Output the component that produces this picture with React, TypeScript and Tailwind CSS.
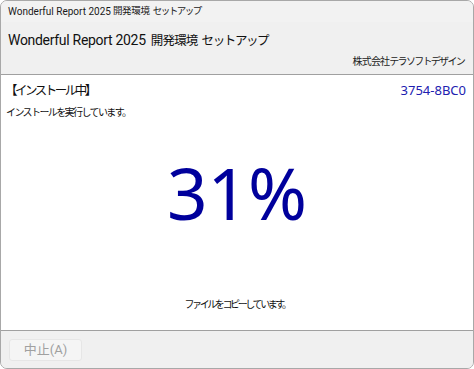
import React from "react";

const latin = { fontFamily: 'Roboto, "Noto Sans CJK JP", sans-serif' };
const noto = { fontFamily: '"Noto Sans", "Noto Sans CJK JP", sans-serif' };

export default function App() {
  return (
    <div className="w-[474px] h-[369px] bg-white" style={latin}>
      <div className="w-[474px] h-[369px] flex flex-col rounded-[7px] border border-[#a8a8a8] bg-[#f0f0f0] overflow-hidden">
        <div className="h-[21px] flex items-center px-[7px] text-[10px] text-[#1a1a1a] bg-[#f2f2f2] whitespace-nowrap">
          <span>Wonderful Report 2025 </span>
          <span className="text-[9.5px] tracking-[-0.3px] ml-[2px]">開発環境</span>
          <span className="text-[9.5px] tracking-[-1.5px] ml-[3px]">セットアップ</span>
        </div>
        <div className="h-[52px] flex flex-col px-[7px] bg-[#f0f0f0]">
          <div className="flex items-baseline text-[14px] tracking-[-0.3px] text-[#111] leading-[20px] mt-[8px] whitespace-nowrap">
            <span>Wonderful Report 2025</span>
            <span className="text-[12.5px] tracking-[-0.8px] ml-[5px]">開発環境</span>
            <span className="text-[12.5px] tracking-[-1.4px] ml-[4px]">セットアップ</span>
          </div>
          <div className="flex justify-end text-[10px] text-[#222] leading-[14px] mt-[4px] pr-[2px] whitespace-nowrap">
            <span className="tracking-[-0.8px]">株式会社</span>
            <span className="tracking-[-1.7px]">テラソフトデザイン</span>
          </div>
        </div>
        <div className="h-[1px] bg-[#a0a0a0]" />
        <div className="flex-1 bg-white flex flex-col px-[4px]">
          <div className="flex justify-between items-center mt-[6px] h-[20px]">
            <span className="text-[12.5px] tracking-[-2.5px] text-[#111] whitespace-nowrap">【インストール中】</span>
            <span className="text-[13px] text-[#2020b0] pr-[3px]" style={noto}>3754-8BC0</span>
          </div>
          <div className="text-[10px] tracking-[-1.6px] text-[#111] mt-[5px] leading-[14px] pl-[1px] whitespace-nowrap">
            インストールを実行しています。
          </div>
          <div className="flex justify-center mt-[25px]">
            <span className="text-[71px] leading-[96px] text-[#00009c]" style={noto}>31%</span>
          </div>
          <div className="flex justify-center mt-[56px] text-[10px] tracking-[-2.4px] text-[#111] whitespace-nowrap">
            ファイルをコピーしています。
          </div>
        </div>
        <div className="h-[1px] bg-[#a0a0a0]" />
        <div className="h-[37px] flex items-center px-[8px] bg-[#f0f0f0]">
          <div className="w-[73px] h-[22px] flex items-center justify-center rounded-[3px] border border-[#e6e6e6] bg-[#f5f5f5] text-[13px] text-[#a0a0a0]">
            中止(A)
          </div>
        </div>
      </div>
    </div>
  );
}
